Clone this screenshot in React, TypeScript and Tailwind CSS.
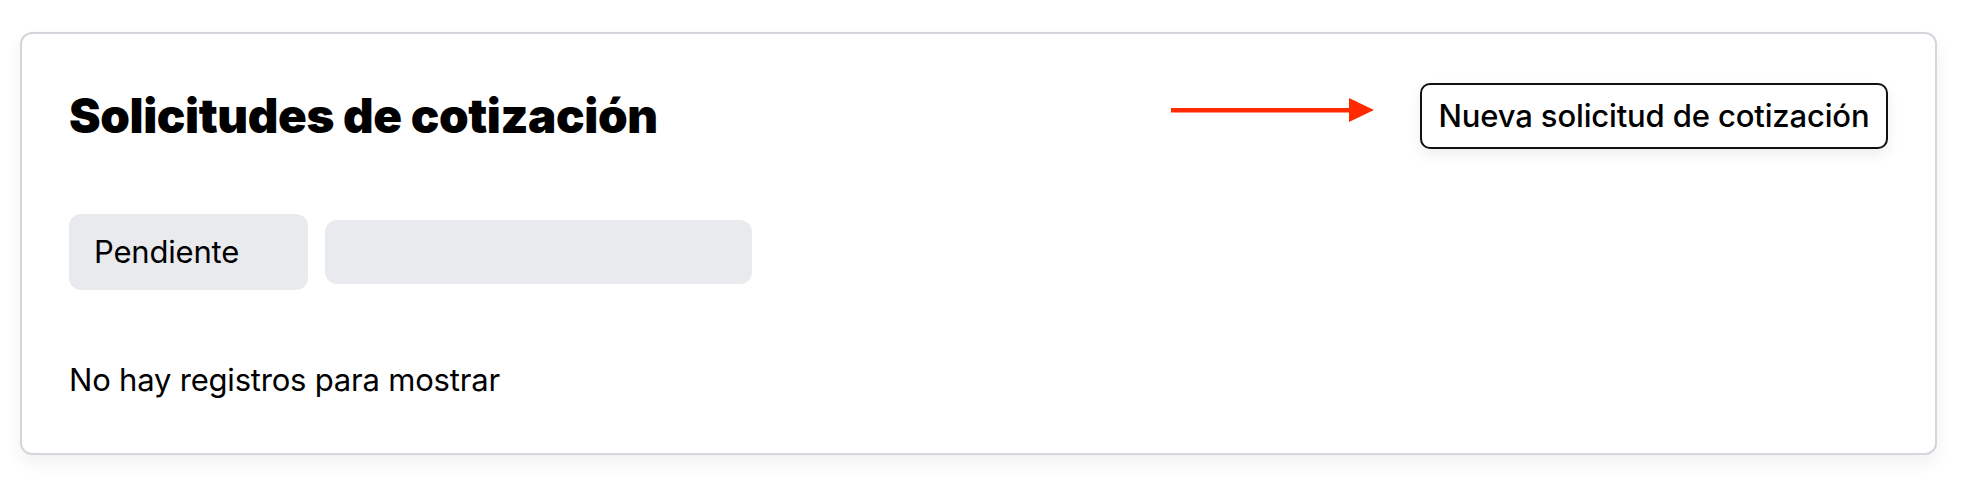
import React from "react";

export default function App() {
  return (
    <div className="min-h-[492px] w-full bg-white pt-[32px] pl-[20px] pr-[25px]" style={{ fontFamily: "Inter, 'Liberation Sans', sans-serif" }}>
      <div className="rounded-[12px] border-2 border-[#d3d6db] bg-white px-[47px] pt-[49px] pb-[49px] text-[#111] shadow-[0_8px_18px_rgba(0,0,0,0.06)]">
        <div className="flex items-center justify-between">
          <h1 className="text-[47.5px] font-black leading-[66px] tracking-[-0.4px] text-black">Solicitudes de cotización</h1>
          <div className="flex items-center gap-[46px]">
            <svg width="203" height="24" viewBox="0 0 203 24" className="relative -top-[6px]">
              <rect x="0" y="10" width="180" height="4.5" fill="#ff2a00" />
              <polygon points="178,0 203,12 178,24" fill="#ff2a00" />
            </svg>
            <button className="flex h-[66px] w-[468px] items-center justify-center rounded-[10px] border-2 border-[#111] bg-white text-[31px] font-medium tracking-[-0.15px] text-black shadow-[0_6px_14px_rgba(0,0,0,0.07)]">
              Nueva solicitud de cotización
            </button>
          </div>
        </div>
        <div className="mt-[65px] flex items-center gap-[17px]">
          <div className="flex h-[76px] w-[239px] items-center rounded-[12px] bg-[#e9eaee] pl-[25px] text-[31px] tracking-[-0.2px] text-black">Pendiente</div>
          <div className="h-[64px] w-[427px] rounded-[12px] bg-[#e9eaee]" />
        </div>
        <p className="mt-[66px] text-[31px] leading-[48px] tracking-[-0.2px] text-black">No hay registros para mostrar</p>
      </div>
    </div>
  );
}
